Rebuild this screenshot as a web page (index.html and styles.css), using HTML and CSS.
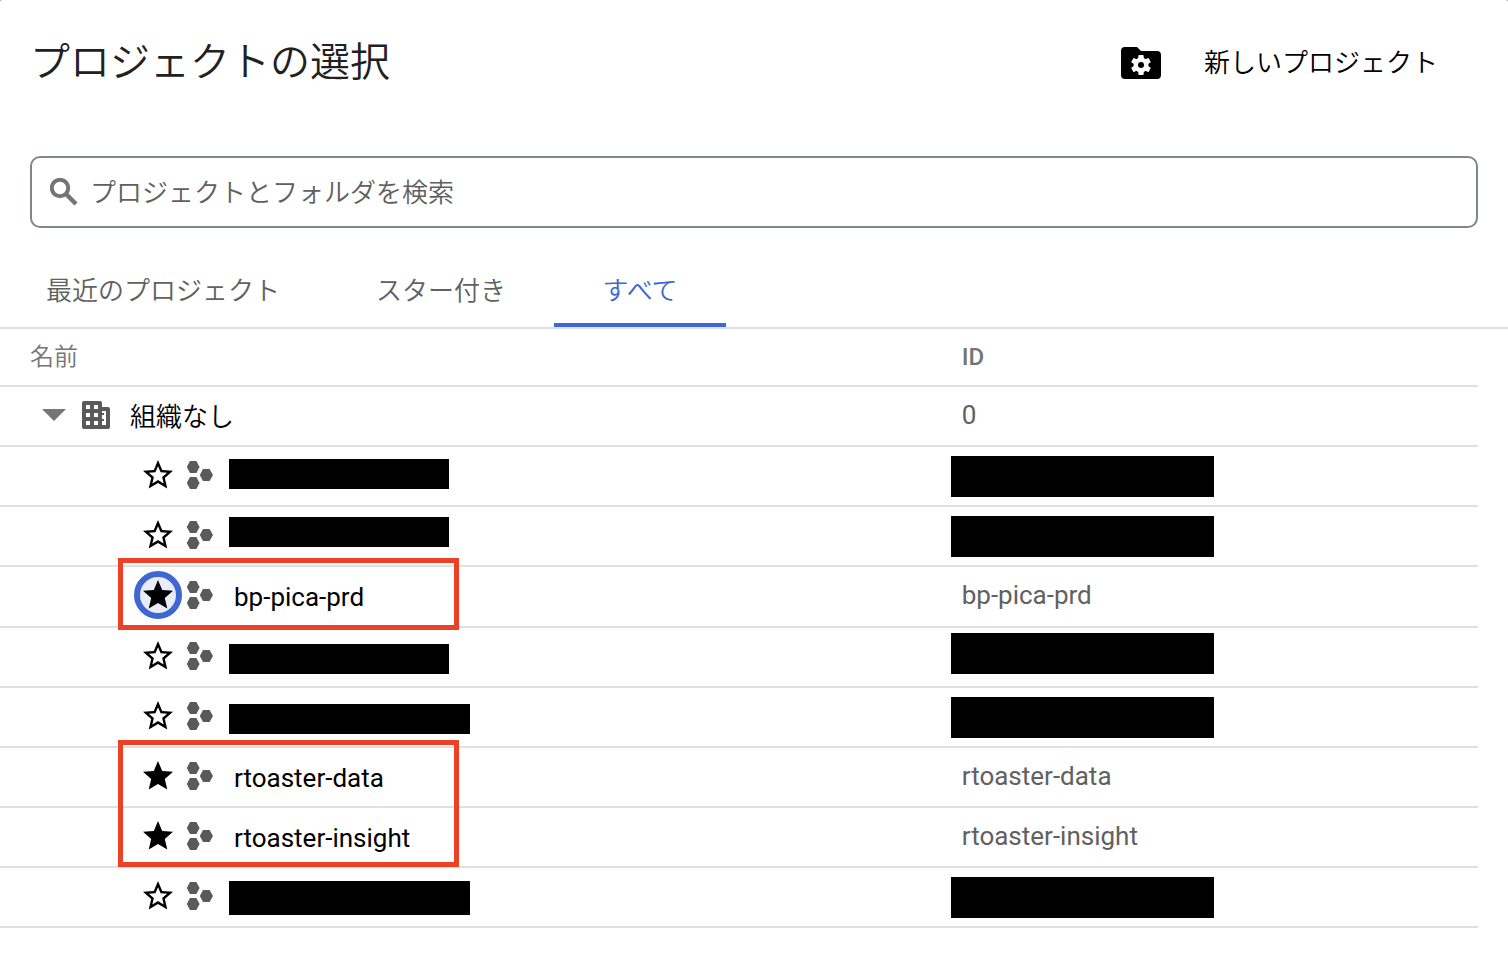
FILE: index.html
```html
<!DOCTYPE html>
<html lang="ja">
<head>
<meta charset="utf-8">
<title>プロジェクトの選択</title>
<link rel="stylesheet" href="styles.css">
</head>
<body>
<svg class="sprite" aria-hidden="true">
  <symbol id="star-outline" viewBox="0 0 24 24"><path d="M22 9.24l-7.19-.62L12 2 9.19 8.63 2 9.24l5.46 4.73L5.82 21 12 17.27 18.18 21l-1.63-7.03L22 9.24zM12 15.4l-3.76 2.27 1-4.28-3.32-2.88 4.38-.38L12 6.1l1.71 4.04 4.38.38-3.32 2.88 1 4.28L12 15.4z"/></symbol>
  <symbol id="star" viewBox="0 0 24 24"><path d="M12 17.27L18.18 21l-1.64-7.03L22 9.24l-7.19-.61L12 2 9.19 8.63 2 9.24l5.46 4.73L5.82 21z"/></symbol>
  <symbol id="project" viewBox="0 0 28 30"><path d="M4 1h6.400l3.200 6-3.200 6H4L.8 7zM4 17h6.400l3.200 6-3.200 6H4l-3.200-6zM17 9h6.600l3.400 6-3.400 6H17l-3.200-6z"/></symbol>
</svg>
<main class="dialog">
  <header class="header">
    <h1 class="title">プロジェクトの選択</h1>
    <button class="new-project" type="button">
      <svg class="folder-icon" viewBox="0 0 40 32" aria-hidden="true">
        <path d="M4 0h12l4 4h16a4 4 0 0 1 4 4v20a4 4 0 0 1-4 4H4a4 4 0 0 1-4-4V4a4 4 0 0 1 4-4z"/>
        <g fill="#fff"><circle cx="20" cy="18" r="7.500"/><rect x="17.300" y="8" width="5.400" height="20" rx="1"/><rect x="17.300" y="8" width="5.400" height="20" rx="1" transform="rotate(60 20 18)"/><rect x="17.300" y="8" width="5.400" height="20" rx="1" transform="rotate(120 20 18)"/></g>
        <circle cx="20" cy="18" r="3"/>
      </svg>
      <span>新しいプロジェクト</span>
    </button>
  </header>
  <div class="search">
    <svg class="search-icon" viewBox="0 0 28 28" aria-hidden="true"><circle cx="10" cy="10" r="8.200" fill="none" stroke="currentColor" stroke-width="4"/><path d="M15.500 15.500l10.500 10.500" stroke="currentColor" stroke-width="4.500"/></svg>
    <input class="search-input" type="text" aria-label="プロジェクトとフォルダを検索" placeholder="プロジェクトとフォルダを検索">
  </div>
  <nav class="tabs" role="tablist">
    <button class="tab" type="button" role="tab" aria-selected="false">最近のプロジェクト</button>
    <button class="tab" type="button" role="tab" aria-selected="false">スター付き</button>
    <button class="tab active" type="button" role="tab" aria-selected="true">すべて</button>
  </nav>
  <div class="table-area">
    <table class="projects">
      <thead>
        <tr><th class="name-col" scope="col">名前</th><th class="id-col" scope="col">ID</th></tr>
      </thead>
      <tbody>
        <tr>
          <td><div class="org">
            <button class="toggle" type="button" aria-label="折りたたむ" aria-expanded="true"></button>
            <svg class="org-icon" viewBox="0 0 28 28" aria-hidden="true"><path fill-rule="evenodd" d="M2 0h16a2 2 0 0 1 2 2v4h6a2 2 0 0 1 2 2v18a2 2 0 0 1-2 2H2a2 2 0 0 1-2-2V2a2 2 0 0 1 2-2zM4 4v4h4V4zM12 4v4h4V4zM4 12v4h4v-4zM12 12v4h4v-4zM4 20v4h4v-4zM12 20v4h4v-4zM20 10v2h2v2h-2v4h2v2h-2v4h4V10z"/></svg>
            <span class="org-name">組織なし</span></div></td>
          <td class="id-col">0</td>
        </tr>
        <tr>
          <td><div class="project"><button class="star" type="button" aria-label="スターを付ける"><svg><use href="#star-outline"/></svg></button><svg class="project-icon"><use href="#project"/></svg></div><span class="mask mask-name"></span></td>
          <td class="id-col"><span class="mask mask-id"></span></td>
        </tr>
        <tr>
          <td><div class="project"><button class="star" type="button" aria-label="スターを付ける"><svg><use href="#star-outline"/></svg></button><svg class="project-icon"><use href="#project"/></svg></div><span class="mask mask-name high"></span></td>
          <td class="id-col"><span class="mask mask-id"></span></td>
        </tr>
        <tr class="focused-row">
          <td><div class="project"><button class="star focused" type="button" aria-label="スターを外す"><svg><use href="#star"/></svg></button><svg class="project-icon"><use href="#project"/></svg><span class="project-name">bp-pica-prd</span></div><span class="callout"></span></td>
          <td class="id-col">bp-pica-prd</td>
        </tr>
        <tr>
          <td><div class="project"><button class="star" type="button" aria-label="スターを付ける"><svg><use href="#star-outline"/></svg></button><svg class="project-icon"><use href="#project"/></svg></div><span class="mask mask-name low"></span></td>
          <td class="id-col"><span class="mask mask-id high"></span></td>
        </tr>
        <tr>
          <td><div class="project"><button class="star" type="button" aria-label="スターを付ける"><svg><use href="#star-outline"/></svg></button><svg class="project-icon"><use href="#project"/></svg></div><span class="mask mask-name low wide"></span></td>
          <td class="id-col"><span class="mask mask-id"></span></td>
        </tr>
        <tr>
          <td><div class="project"><button class="star" type="button" aria-label="スターを外す"><svg><use href="#star"/></svg></button><svg class="project-icon"><use href="#project"/></svg><span class="project-name">rtoaster-data</span></div><span class="callout two-rows"></span></td>
          <td class="id-col">rtoaster-data</td>
        </tr>
        <tr>
          <td><div class="project"><button class="star" type="button" aria-label="スターを外す"><svg><use href="#star"/></svg></button><svg class="project-icon"><use href="#project"/></svg><span class="project-name">rtoaster-insight</span></div></td>
          <td class="id-col">rtoaster-insight</td>
        </tr>
        <tr>
          <td><div class="project"><button class="star" type="button" aria-label="スターを付ける"><svg><use href="#star-outline"/></svg></button><svg class="project-icon"><use href="#project"/></svg></div><span class="mask mask-name wide tall"></span></td>
          <td class="id-col"><span class="mask mask-id"></span></td>
        </tr>
      </tbody>
    </table>
  </div>
</main>
</body>
</html>
```
FILE: styles.css
```css
* { box-sizing: border-box; }

body {
  margin: 0;
  background: #8a8a8a;
  color: #000;
  font-family: Roboto, "Noto Sans CJK JP", sans-serif;
  font-size: 26px;
  line-height: 32px;
}

button, input { font: inherit; }

button {
  margin: 0;
  padding: 0;
  border: 0;
  background: none;
  color: inherit;
  cursor: pointer;
}

svg { display: block; fill: currentColor; flex: none; }

.sprite { position: absolute; width: 0; height: 0; }

.dialog {
  min-height: 100vh;
  background: #fff;
  border-radius: 2px 2px 0 0;
}

.header {
  display: flex;
  align-items: center;
  justify-content: space-between;
  padding: 37px 70px 0 30px;
}

.title {
  margin: 0;
  color: #212121;
  font-size: 40px;
  font-weight: 350;
  line-height: 52px;
}

.new-project {
  display: flex;
  align-items: center;
  gap: 43px;
  font-weight: 350;
}

.folder-icon { width: 40px; height: 32px; }

.search {
  display: flex;
  align-items: center;
  gap: 12px;
  height: 72px;
  margin: 67px 30px 0;
  padding: 0 18px;
  border: 2px solid #80868b;
  border-radius: 10px;
}

.search-icon { width: 28px; height: 28px; color: #757575; }

.search-input {
  flex: 1;
  min-width: 0;
  padding: 2px 0 0;
  border: 0;
  outline: 0;
  background: none;
  font-weight: 350;
}

.search-input::placeholder { color: #5f5f5f; opacity: 1; }

.tabs {
  display: flex;
  margin-top: 24px;
  border-bottom: 2px solid #e0e0e0;
}

.tab {
  min-width: 172px;
  height: 75px;
  padding: 6px 48px 0;
  border-bottom: 4px solid transparent;
  color: #616161;
  font-weight: 350;
}

.tab:first-child { padding-left: 46px; }

.tab.active { border-color: #3f67d2; color: #3f67d2; }

.table-area { padding-right: 30px; }

.projects {
  width: 100%;
  border-spacing: 0;
  table-layout: fixed;
}

th, td {
  position: relative;
  height: 60px;
  padding: 0 0 2px;
  border-bottom: 2px solid #e0e0e0;
  text-align: left;
  color: #616161;
}

th {
  height: 58px;
  padding: 0;
  color: #757575;
  font-size: 24px;
  font-weight: 500;
}

.name-col { width: 65%; padding-left: 30px; font-weight: 350; }

.id-col { padding-left: 1px; }

.focused-row td { height: 61px; padding-bottom: 4px; }

.org {
  display: flex;
  align-items: center;
  padding-left: 42px;
  color: #000;
}

.toggle {
  margin-right: 16px;
  border: 12px solid transparent;
  border-top-color: #757575;
  border-bottom: 0;
}

.org-icon { width: 28px; height: 28px; margin-right: 20px; color: #5a5a5a; }

.org-name { padding-top: 4px; font-weight: 350; }

.project {
  display: flex;
  align-items: center;
  padding-left: 134px;
  color: #000;
}

.star {
  display: grid;
  place-items: center;
  width: 48px;
  height: 48px;
  border-radius: 50%;
}

.star svg { width: 36px; height: 36px; }

.star.focused { border: 6px solid #3f67d2; background: #e9ecf8; }

.project-icon { width: 28px; height: 30px; margin-left: 4px; color: #5a5a5a; }

.project-name { padding: 4px 0 0 20px; }

/* Redaction bars and callout frames laid over the rows */
.mask { position: absolute; background: #000; }

.mask-name { left: 229px; top: 12px; width: 220px; height: 30px; }

.mask-name.high { top: 10px; }

.mask-name.low { top: 16px; }

.mask-name.wide { width: 241px; }

.mask-name.tall { top: 13px; height: 34px; }

.mask-id { left: -10px; top: 9px; width: 263px; height: 41px; }

.mask-id.high { top: 5px; }

.callout {
  position: absolute;
  z-index: 1;
  left: 118px;
  top: -9px;
  width: 341px;
  height: 72px;
  border: 5px solid #ec4126;
  pointer-events: none;
}

.callout.two-rows { top: -8px; height: 127px; }
```
